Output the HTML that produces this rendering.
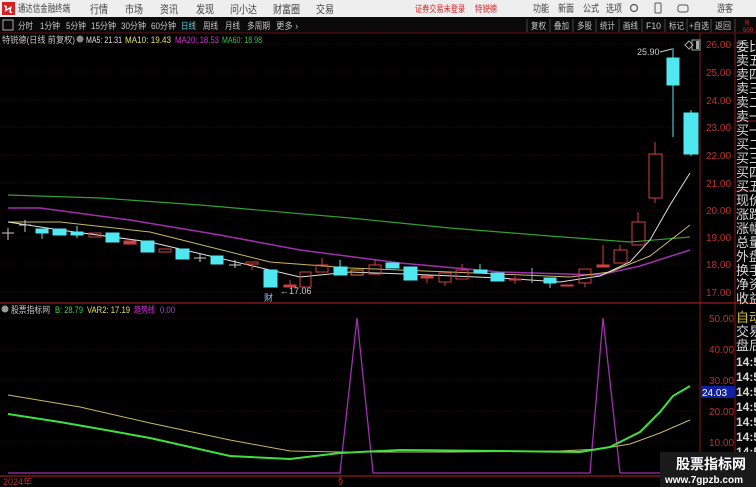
<!DOCTYPE html>
<html><head><meta charset="utf-8"><style>
body{margin:0;width:756px;height:487px;overflow:hidden;background:#000;font-family:"Liberation Sans","Noto Sans CJK SC",sans-serif}
svg{display:block}
text{font-family:"Liberation Sans","Noto Sans CJK SC",sans-serif}
</style></head><body>
<svg width="756" height="487" viewBox="0 0 756 487" xmlns="http://www.w3.org/2000/svg">
<rect width="756" height="487" fill="#000"/>
<!-- title bar -->
<rect x="0" y="0" width="756" height="17" fill="#eeeeee"/>
<rect x="2" y="2" width="13" height="13" fill="#d42020"/>
<text x="4" y="13" font-size="11" fill="#fff" font-weight="bold">Ϟ</text>
<g font-size="10" fill="#444" lengthAdjust="spacingAndGlyphs">
<text x="18" y="12" textLength="52" lengthAdjust="spacingAndGlyphs">通达信金融终端</text>
<text x="90" y="13" font-size="11" textLength="18" lengthAdjust="spacingAndGlyphs">行情</text>
<text x="125" y="13" font-size="11" textLength="18" lengthAdjust="spacingAndGlyphs">市场</text>
<text x="160" y="13" font-size="11" textLength="18" lengthAdjust="spacingAndGlyphs">资讯</text>
<text x="196" y="13" font-size="11" textLength="18" lengthAdjust="spacingAndGlyphs">发现</text>
<text x="230" y="13" font-size="11" textLength="27" lengthAdjust="spacingAndGlyphs">问小达</text>
<text x="273" y="13" font-size="11" textLength="27" lengthAdjust="spacingAndGlyphs">财富圈</text>
<text x="316" y="13" font-size="11" textLength="18" lengthAdjust="spacingAndGlyphs">交易</text>
<text x="533" y="12" textLength="16" lengthAdjust="spacingAndGlyphs">功能</text>
<text x="558" y="12" textLength="16" lengthAdjust="spacingAndGlyphs">新面</text>
<text x="583" y="12" textLength="16" lengthAdjust="spacingAndGlyphs">公式</text>
<text x="606" y="12" textLength="16" lengthAdjust="spacingAndGlyphs">选项</text>
<text x="717" y="12" textLength="16" lengthAdjust="spacingAndGlyphs">游客</text>
</g>
<text x="415" y="12" font-size="9" fill="#e02020" textLength="50" lengthAdjust="spacingAndGlyphs">证券交易未登录</text>
<text x="475" y="12" font-size="9" fill="#e02020" textLength="22" lengthAdjust="spacingAndGlyphs">特锐德</text>
<circle cx="634" cy="8" r="3.5" fill="none" stroke="#555" stroke-width="1.2"/>
<rect x="655" y="3" width="6" height="10" rx="1" fill="none" stroke="#555"/>
<rect x="678" y="5" width="10" height="7" rx="2" fill="none" stroke="#555"/>
<!-- toolbar -->
<rect x="0" y="17" width="756" height="16" fill="#0a0a0a"/>
<line x1="0" y1="33" x2="756" y2="33" stroke="#6a1010"/>
<rect x="3" y="20" width="10" height="10" fill="none" stroke="#aaa"/>
<g font-size="9" fill="#c8c8c8">
<text x="18" y="29" textLength="15" lengthAdjust="spacingAndGlyphs">分时</text>
<text x="40" y="29" textLength="20" lengthAdjust="spacingAndGlyphs">1分钟</text>
<text x="66" y="29" textLength="20" lengthAdjust="spacingAndGlyphs">5分钟</text>
<text x="91" y="29" textLength="25" lengthAdjust="spacingAndGlyphs">15分钟</text>
<text x="121" y="29" textLength="25" lengthAdjust="spacingAndGlyphs">30分钟</text>
<text x="151" y="29" textLength="25" lengthAdjust="spacingAndGlyphs">60分钟</text>
<text x="181" y="29" fill="#4fd0e0" textLength="15" lengthAdjust="spacingAndGlyphs">日线</text>
<text x="203" y="29" textLength="15" lengthAdjust="spacingAndGlyphs">周线</text>
<text x="225" y="29" textLength="15" lengthAdjust="spacingAndGlyphs">月线</text>
<text x="247" y="29" textLength="23" lengthAdjust="spacingAndGlyphs">多周期</text>
<text x="276" y="29" textLength="22" lengthAdjust="spacingAndGlyphs">更多 ›</text>
<text x="531" y="29" textLength="15" lengthAdjust="spacingAndGlyphs">复权</text>
<text x="554" y="29" textLength="15" lengthAdjust="spacingAndGlyphs">叠加</text>
<text x="577" y="29" textLength="15" lengthAdjust="spacingAndGlyphs">多股</text>
<text x="600" y="29" textLength="15" lengthAdjust="spacingAndGlyphs">统计</text>
<text x="623" y="29" textLength="15" lengthAdjust="spacingAndGlyphs">画线</text>
<text x="646" y="29" textLength="15" lengthAdjust="spacingAndGlyphs">F10</text>
<text x="669" y="29" textLength="15" lengthAdjust="spacingAndGlyphs">标记</text>
<text x="689" y="29" textLength="20" lengthAdjust="spacingAndGlyphs">+自选</text>
<text x="715" y="29" textLength="16" lengthAdjust="spacingAndGlyphs">返回</text>
</g>
<g stroke="#444"><line x1="527" y1="19" x2="527" y2="32"/><line x1="550" y1="19" x2="550" y2="32"/><line x1="573" y1="19" x2="573" y2="32"/><line x1="596" y1="19" x2="596" y2="32"/><line x1="619" y1="19" x2="619" y2="32"/><line x1="642" y1="19" x2="642" y2="32"/><line x1="665" y1="19" x2="665" y2="32"/><line x1="687" y1="19" x2="687" y2="32"/><line x1="711" y1="19" x2="711" y2="32"/><line x1="735" y1="19" x2="735" y2="32"/></g>
<text x="745" y="25" font-size="6" fill="#e03030">R</text><text x="743" y="32" font-size="6" fill="#e03030">500</text>
<!-- info row -->
<g font-size="9">
<text x="2" y="43" fill="#c8c8c8" textLength="73" lengthAdjust="spacingAndGlyphs">特锐德(日线 前复权)</text>
<circle cx="80" cy="39" r="3.5" fill="#888"/>
<text x="86" y="43" fill="#e0e0e0" textLength="36" lengthAdjust="spacingAndGlyphs">MA5: 21.31</text>
<text x="125" y="43" fill="#e8e060" textLength="46" lengthAdjust="spacingAndGlyphs">MA10: 19.43</text>
<text x="175" y="43" fill="#d030d0" textLength="44" lengthAdjust="spacingAndGlyphs">MA20: 18.53</text>
<text x="222" y="43" fill="#40c040" textLength="40" lengthAdjust="spacingAndGlyphs">MA60: 18.98</text>
</g>
<!-- frames -->
<line x1="700" y1="33" x2="700" y2="487" stroke="#8a1818"/>
<line x1="735" y1="33" x2="735" y2="487" stroke="#8a1818"/>
<line x1="0" y1="303" x2="735" y2="303" stroke="#c02020"/>
<line x1="0" y1="476" x2="735" y2="476" stroke="#c02020"/>
<line x1="735" y1="121" x2="756" y2="121" stroke="#8a1818"/>
<line x1="735" y1="191" x2="756" y2="191" stroke="#8a1818"/>
<line x1="735" y1="303" x2="756" y2="303" stroke="#c02020"/>
<!-- grid -->
<g stroke="#3a0808" stroke-dasharray="1,2">
<line x1="0" y1="44" x2="700" y2="44"/><line x1="0" y1="72" x2="700" y2="72"/><line x1="0" y1="100" x2="700" y2="100"/><line x1="0" y1="127" x2="700" y2="127"/><line x1="0" y1="155" x2="700" y2="155"/><line x1="0" y1="183" x2="700" y2="183"/><line x1="0" y1="210" x2="700" y2="210"/><line x1="0" y1="237" x2="700" y2="237"/><line x1="0" y1="264" x2="700" y2="264"/><line x1="0" y1="292" x2="700" y2="292"/>
<line x1="0" y1="318" x2="700" y2="318"/><line x1="0" y1="349" x2="700" y2="349"/><line x1="0" y1="380" x2="700" y2="380"/><line x1="0" y1="411" x2="700" y2="411"/><line x1="0" y1="442" x2="700" y2="442"/>
</g>
<g font-size="10" fill="#c03030">
<text x="706" y="48">26.00</text><text x="706" y="76">25.00</text><text x="706" y="104">24.00</text><text x="706" y="131">23.00</text><text x="706" y="159">22.00</text><text x="706" y="187">21.00</text><text x="706" y="214">20.00</text><text x="706" y="241">19.00</text><text x="706" y="268">18.00</text><text x="706" y="296">17.00</text>
<text x="709" y="322">50.00</text><text x="709" y="353">40.00</text><text x="709" y="384">30.00</text><text x="709" y="415">20.00</text><text x="709" y="446">10.00</text>
<text x="3" y="485" font-size="9">2024年</text><text x="338" y="485" font-size="9">9</text>
</g>
<line x1="340" y1="476" x2="340" y2="480" stroke="#c02020"/>
<rect x="701" y="386" width="34" height="12" fill="#1020a0"/>
<text x="702" y="396" font-size="10" fill="#fff">24.03</text>
<!-- right column -->
<g font-size="13" fill="#d8d8d8">
<text x="736" y="51">委比</text><text x="736" y="65">卖五</text><text x="736" y="79">卖四</text><text x="736" y="93">卖三</text><text x="736" y="107">卖二</text><text x="736" y="121">卖一</text>
<text x="736" y="135">买一</text><text x="736" y="149">买二</text><text x="736" y="163">买三</text><text x="736" y="177">买四</text><text x="736" y="191">买五</text>
<text x="736" y="205">现价</text><text x="736" y="219">涨跌</text><text x="736" y="233">涨幅</text><text x="736" y="247">总量</text><text x="736" y="261">外盘</text><text x="736" y="275">换手</text><text x="736" y="289">净资</text><text x="736" y="303">收益</text>
<text x="736" y="322" fill="#d0c040">自动</text><text x="736" y="336">交易</text><text x="736" y="350">盘后</text>
<text x="736" y="366" font-weight="bold" font-size="12">14:5</text><text x="736" y="381" font-weight="bold" font-size="12">14:5</text><text x="736" y="396" font-weight="bold" font-size="12">14:5</text><text x="736" y="411" font-weight="bold" font-size="12">14:5</text><text x="736" y="426" font-weight="bold" font-size="12">14:5</text><text x="736" y="441" font-weight="bold" font-size="12">14:5</text><text x="736" y="456" font-weight="bold" font-size="12">14:5</text>
</g>
<!-- MAs -->
<polyline fill="none" stroke="#30a030" stroke-width="1.2" points="8,195 100,198 200,205 350,218 450,228 550,236 630,242 690,237"/>
<polyline fill="none" stroke="#a030b0" stroke-width="1.5" points="8,208 40,208 130,220 220,235 300,250 400,263 500,272 600,275 640,266 690,250"/>
<polyline fill="none" stroke="#c8b860" stroke-width="1" points="8,222 60,222 150,232 270,262 350,268 450,272 570,277 610,272 650,256 690,225"/>
<polyline fill="none" stroke="#e0e0e0" stroke-width="1" points="8,222 60,230 150,242 270,270 300,277 350,272 430,275 500,278 560,282 600,276 630,262 650,240 670,205 690,173"/>
<!-- candles -->
<g stroke="#50e8f0" fill="#50e8f0">
<line x1="2" y1="233" x2="14" y2="233" stroke="#ccc"/><line x1="8" y1="228" x2="8" y2="240" stroke="#ccc"/>
<line x1="19" y1="225" x2="31" y2="225" stroke="#ccc"/><line x1="25" y1="220" x2="25" y2="232" stroke="#ccc"/>
<rect x="36" y="229" width="12" height="4"/><line x1="42" y1="229" x2="42" y2="239"/>
<rect x="53" y="229" width="13" height="6"/>
<rect x="71" y="232" width="12" height="3"/><line x1="77" y1="226" x2="77" y2="238"/>
<rect x="106" y="233" width="13" height="9"/>
<rect x="141" y="241" width="13" height="11"/>
<rect x="176" y="249" width="13" height="10"/>
<line x1="194" y1="258" x2="206" y2="258" stroke="#ccc"/><line x1="200" y1="253" x2="200" y2="262" stroke="#ccc"/>
<rect x="211" y="256" width="12" height="8"/>
<line x1="229" y1="265" x2="241" y2="265" stroke="#ccc"/><line x1="235" y1="260" x2="235" y2="268" stroke="#ccc"/>
<rect x="264" y="270" width="13" height="17"/>
<rect x="334" y="267" width="13" height="8"/><line x1="340" y1="260" x2="340" y2="267"/>
<rect x="386" y="263" width="13" height="5"/>
<rect x="404" y="267" width="13" height="13"/>
<rect x="474" y="270" width="13" height="3"/><line x1="480" y1="264" x2="480" y2="270"/>
<rect x="491" y="273" width="13" height="8"/>
<line x1="532" y1="268" x2="532" y2="283" stroke="#aaa"/>
<rect x="544" y="278" width="12" height="5"/><line x1="550" y1="283" x2="550" y2="288"/>
<rect x="667" y="58" width="12" height="27"/><line x1="673" y1="48" x2="673" y2="137"/>
<rect x="684" y="113" width="14" height="41"/><line x1="691" y1="110" x2="691" y2="156"/>
</g>
<g stroke="#d04040" fill="none">
<rect x="89" y="233" width="12" height="4"/>
<rect x="124" y="241" width="12" height="3" fill="#d04040"/>
<rect x="159" y="249" width="12" height="3"/>
<rect x="246" y="262" width="12" height="2"/><line x1="252" y1="264" x2="252" y2="270"/>
<rect x="284" y="285" width="12" height="2" fill="#d04040"/><line x1="290" y1="280" x2="290" y2="287"/>
<rect x="300" y="272" width="11" height="15"/>
<rect x="316" y="265" width="12" height="7"/><line x1="322" y1="258" x2="322" y2="265"/>
<rect x="351" y="270" width="12" height="5" stroke="#e08030"/>
<rect x="369" y="265" width="12" height="9"/><line x1="375" y1="259" x2="375" y2="265"/>
<rect x="421" y="276" width="12" height="2" fill="#d04040"/><line x1="427" y1="278" x2="427" y2="283"/>
<rect x="439" y="273" width="12" height="9"/><line x1="445" y1="282" x2="445" y2="286"/>
<rect x="456" y="270" width="12" height="9"/><line x1="462" y1="264" x2="462" y2="270"/>
<rect x="509" y="279" width="12" height="1" fill="#d04040"/><line x1="515" y1="276" x2="515" y2="284"/>
<rect x="561" y="285" width="12" height="1" fill="#d04040"/>
<rect x="579" y="269" width="12" height="14"/><line x1="585" y1="283" x2="585" y2="287"/>
<rect x="597" y="265" width="12" height="2" fill="#d04040"/><line x1="603" y1="245" x2="603" y2="265"/>
<rect x="614" y="250" width="13" height="13"/><line x1="620" y1="245" x2="620" y2="250"/>
<rect x="632" y="222" width="13" height="23"/><line x1="638" y1="212" x2="638" y2="222"/>
<rect x="649" y="154" width="13" height="44"/><line x1="655" y1="142" x2="655" y2="154"/><line x1="655" y1="198" x2="655" y2="203"/>
</g>
<text x="280" y="294" font-size="9" fill="#ccc">←17.06</text>
<text x="264" y="301" font-size="9" fill="#8cf">财</text>
<text x="637" y="55" font-size="9" fill="#ccc">25.90</text>
<line x1="660" y1="52" x2="672" y2="49" stroke="#ccc"/>
<path d="M685 45 l4 -4 l4 4 l-4 4z" fill="none" stroke="#aaa"/>
<rect x="692" y="40" width="8" height="10" fill="none" stroke="#aaa"/><rect x="696" y="41" width="3" height="8" fill="#aaa"/>
<!-- sub header -->
<circle cx="5" cy="309" r="3.5" fill="#999"/>
<g font-size="9"><text x="11" y="313" fill="#c8c8c8" textLength="39" lengthAdjust="spacingAndGlyphs">股票指标网</text>
<text x="55" y="313" fill="#40d040" textLength="28" lengthAdjust="spacingAndGlyphs">B: 28.79</text>
<text x="87" y="313" fill="#e0e060" textLength="43" lengthAdjust="spacingAndGlyphs">VAR2: 17.19</text>
<text x="134" y="313" fill="#d030d0" textLength="21" lengthAdjust="spacingAndGlyphs">趋势线</text><text x="160" y="313" fill="#a050c0" textLength="15" lengthAdjust="spacingAndGlyphs">0.00</text></g>
<!-- lower -->
<polyline fill="none" stroke="#a030b0" stroke-width="1.3" points="8,473 340,473 357,318 373,473 590,473 603,318 620,473 690,473"/>
<polyline fill="none" stroke="#c8b860" stroke-width="1" points="8,395 80,407 150,423 230,440 290,451 340,452 450,452 560,451 600,449 630,444 660,433 690,420"/>
<polyline fill="none" stroke="#40e040" stroke-width="2" points="8,414 60,422 100,429 150,438 230,456 290,459 340,453 400,450 500,451 580,452 610,447 640,432 660,412 673,396 690,386"/>
<!-- watermark -->
<rect x="660" y="452" width="96" height="35" fill="#1a1a1a"/>
<text x="676" y="469" font-size="14" font-weight="bold" fill="#fff">股票指标网</text>
<text x="665" y="483" font-size="10" font-weight="bold" fill="#fff">www.7gpzb.com</text>
</svg>
</body></html>
